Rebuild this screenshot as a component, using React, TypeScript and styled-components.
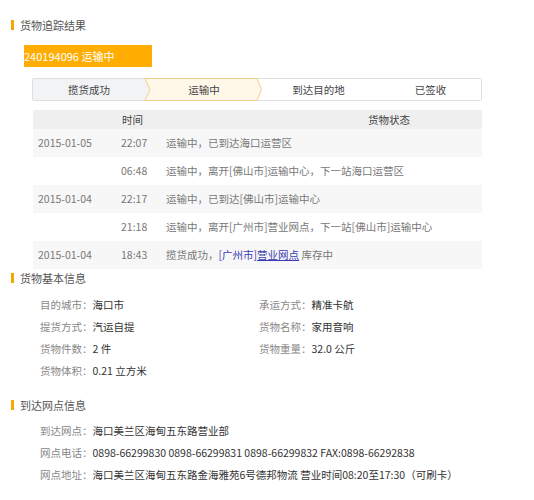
import React from "react";
import styled, { createGlobalStyle } from "styled-components";

const GlobalStyle = createGlobalStyle`
  body {
    margin: 0;
    background: #fff;
    font-family: "Noto Sans CJK SC", "Noto Sans", sans-serif;
    font-size: 10.5px;
    color: #666;
  }
`;

const Page = styled.div`
  width: 534px;
  padding-top: 18px;
`;

const SectionTitle = styled.div<{ $top?: number }>`
  display: flex;
  align-items: center;
  height: 14px;
  margin-left: 11px;
  margin-top: ${p => p.$top || 0}px;
  font-size: 11px;
  color: #555;
  &::before {
    content: "";
    width: 3px;
    height: 10px;
    margin-right: 6px;
    background: #f5a800;
  }
`;

const OrderBar = styled.div`
  width: 128px;
  height: 22px;
  margin: 13px 0 0 24px;
  line-height: 22px;
  background: #ffad00;
  color: #fff;
  font-size: 11px;
  white-space: nowrap;
`;

const Steps = styled.div`
  display: flex;
  width: 448px;
  height: 21px;
  margin: 11px 0 0 32px;
  border: 1px solid #dfdfdf;
  border-radius: 2px;
`;

const Step = styled.div<{ $state: "done" | "active" | "todo" }>`
  position: relative;
  box-sizing: border-box;
  flex: none;
  width: 25%;
  display: flex;
  align-items: center;
  justify-content: center;
  padding-left: ${p => (p.$state === "done" ? 0 : p.$state === "active" ? 6 : 11)}px;
  color: #444;
  background: ${p => (p.$state === "done" ? "#f2f3f5" : "#fff")};
  z-index: ${p => (p.$state === "active" ? 2 : 1)};
`;

const StepLabel = styled.span`
  position: relative;
  z-index: 1;
`;

const StepShape = styled.svg`
  position: absolute;
  left: 0;
  top: -1px;
  width: calc(100% + 5px);
  height: 23px;
  overflow: visible;
`;

const Table = styled.div`
  width: 449px;
  margin: 9px 0 0 33px;
  display: grid;
  grid-template-columns: 88px 45px 1fr;
`;

const HeadCell = styled.div<{ $center?: boolean }>`
  height: 19px;
  line-height: 19px;
  background: #efefef;
  color: #444;
  text-align: ${p => (p.$center ? "center" : "left")};
  padding-left: ${p => (p.$center ? "130px" : "1px")};
`;

const Cell = styled.div<{ $odd: boolean; $pad?: number }>`
  height: 28px;
  line-height: 28px;
  padding-left: ${p => p.$pad || 0}px;
  background: ${p => (p.$odd ? "#f7f7f7" : "#fff")};
  color: #777;
  white-space: nowrap;
`;

const Link = styled.a`
  color: #3b3bb5;
  text-decoration: none;
  span {
    text-decoration: underline;
  }
`;

const InfoGrid = styled.div<{ $cols: string; $top: number }>`
  display: grid;
  grid-template-columns: ${p => p.$cols};
  margin: ${p => p.$top}px 0 0 40px;
`;

const InfoRow = styled.div`
  height: 22px;
  line-height: 22px;
  white-space: nowrap;
  color: #888;
  b {
    font-weight: normal;
    color: #333;
  }
`;

const steps: { label: string; state: "done" | "active" | "todo" }[] = [
  { label: "揽货成功", state: "done" },
  { label: "运输中", state: "active" },
  { label: "到达目的地", state: "todo" },
  { label: "已签收", state: "todo" }
];

const rows = [
  { date: "2015-01-05", time: "22:07", text: "运输中，已到达海口运营区" },
  { date: "", time: "06:48", text: "运输中，离开[佛山市]运输中心，下一站海口运营区" },
  { date: "2015-01-04", time: "22:17", text: "运输中，已到达[佛山市]运输中心" },
  { date: "", time: "21:18", text: "运输中，离开[广州市]营业网点，下一站[佛山市]运输中心" },
  { date: "2015-01-04", time: "18:43", text: "" }
];

const App = () => {
  return (
    <Page>
      <GlobalStyle />
      <SectionTitle>货物追踪结果</SectionTitle>
      <OrderBar>240194096 运输中</OrderBar>
      <Steps>
        {steps.map(s => (
          <Step key={s.label} $state={s.state}>
            {s.state === "active" && (
              <StepShape viewBox="0 0 117 23" preserveAspectRatio="none">
                <polygon points="0,0 5,11.5 0,23" fill="#f2f3f5" />
                <polygon
                  points="0,0.5 112,0.5 116.5,11.5 112,22.5 0,22.5 5,11.5"
                  fill="#fff8e8"
                  stroke="#f3cf8c"
                  strokeWidth="1"
                />
              </StepShape>
            )}
            <StepLabel>{s.label}</StepLabel>
          </Step>
        ))}
      </Steps>
      <Table>
        <HeadCell />
        <HeadCell>时间</HeadCell>
        <HeadCell $center>货物状态</HeadCell>
        {rows.map((r, i) => (
          <React.Fragment key={i}>
            <Cell $odd={i % 2 === 0} $pad={5}>{r.date}</Cell>
            <Cell $odd={i % 2 === 0}>{r.time}</Cell>
            <Cell $odd={i % 2 === 0}>
              {r.text || (
                <>
                  揽货成功，
                  <Link>
                    [广州市]<span>营业网点</span>
                  </Link>{" "}
                  库存中
                </>
              )}
            </Cell>
          </React.Fragment>
        ))}
      </Table>
      <SectionTitle $top={2}>货物基本信息</SectionTitle>
      <InfoGrid $cols="219px 1fr" $top={9}>
        <InfoRow>目的城市：<b>海口市</b></InfoRow>
        <InfoRow>承运方式：<b>精准卡航</b></InfoRow>
        <InfoRow>提货方式：<b>汽运自提</b></InfoRow>
        <InfoRow>货物名称：<b>家用音响</b></InfoRow>
        <InfoRow>货物件数：<b>2 件</b></InfoRow>
        <InfoRow>货物重量：<b>32.0 公斤</b></InfoRow>
        <InfoRow>货物体积：<b>0.21 立方米</b></InfoRow>
      </InfoGrid>
      <SectionTitle $top={16}>到达网点信息</SectionTitle>
      <InfoGrid $cols="1fr" $top={8}>
        <InfoRow>到达网点：<b>海口美兰区海甸五东路营业部</b></InfoRow>
        <InfoRow>
          网点电话：<b>0898-66299830 0898-66299831 0898-66299832 FAX:0898-66292838</b>
        </InfoRow>
        <InfoRow>
          网点地址：<b>海口美兰区海甸五东路金海雅苑6号德邦物流 营业时间08:20至17:30（可刷卡）</b>
        </InfoRow>
      </InfoGrid>
    </Page>
  );
};

export default App;
